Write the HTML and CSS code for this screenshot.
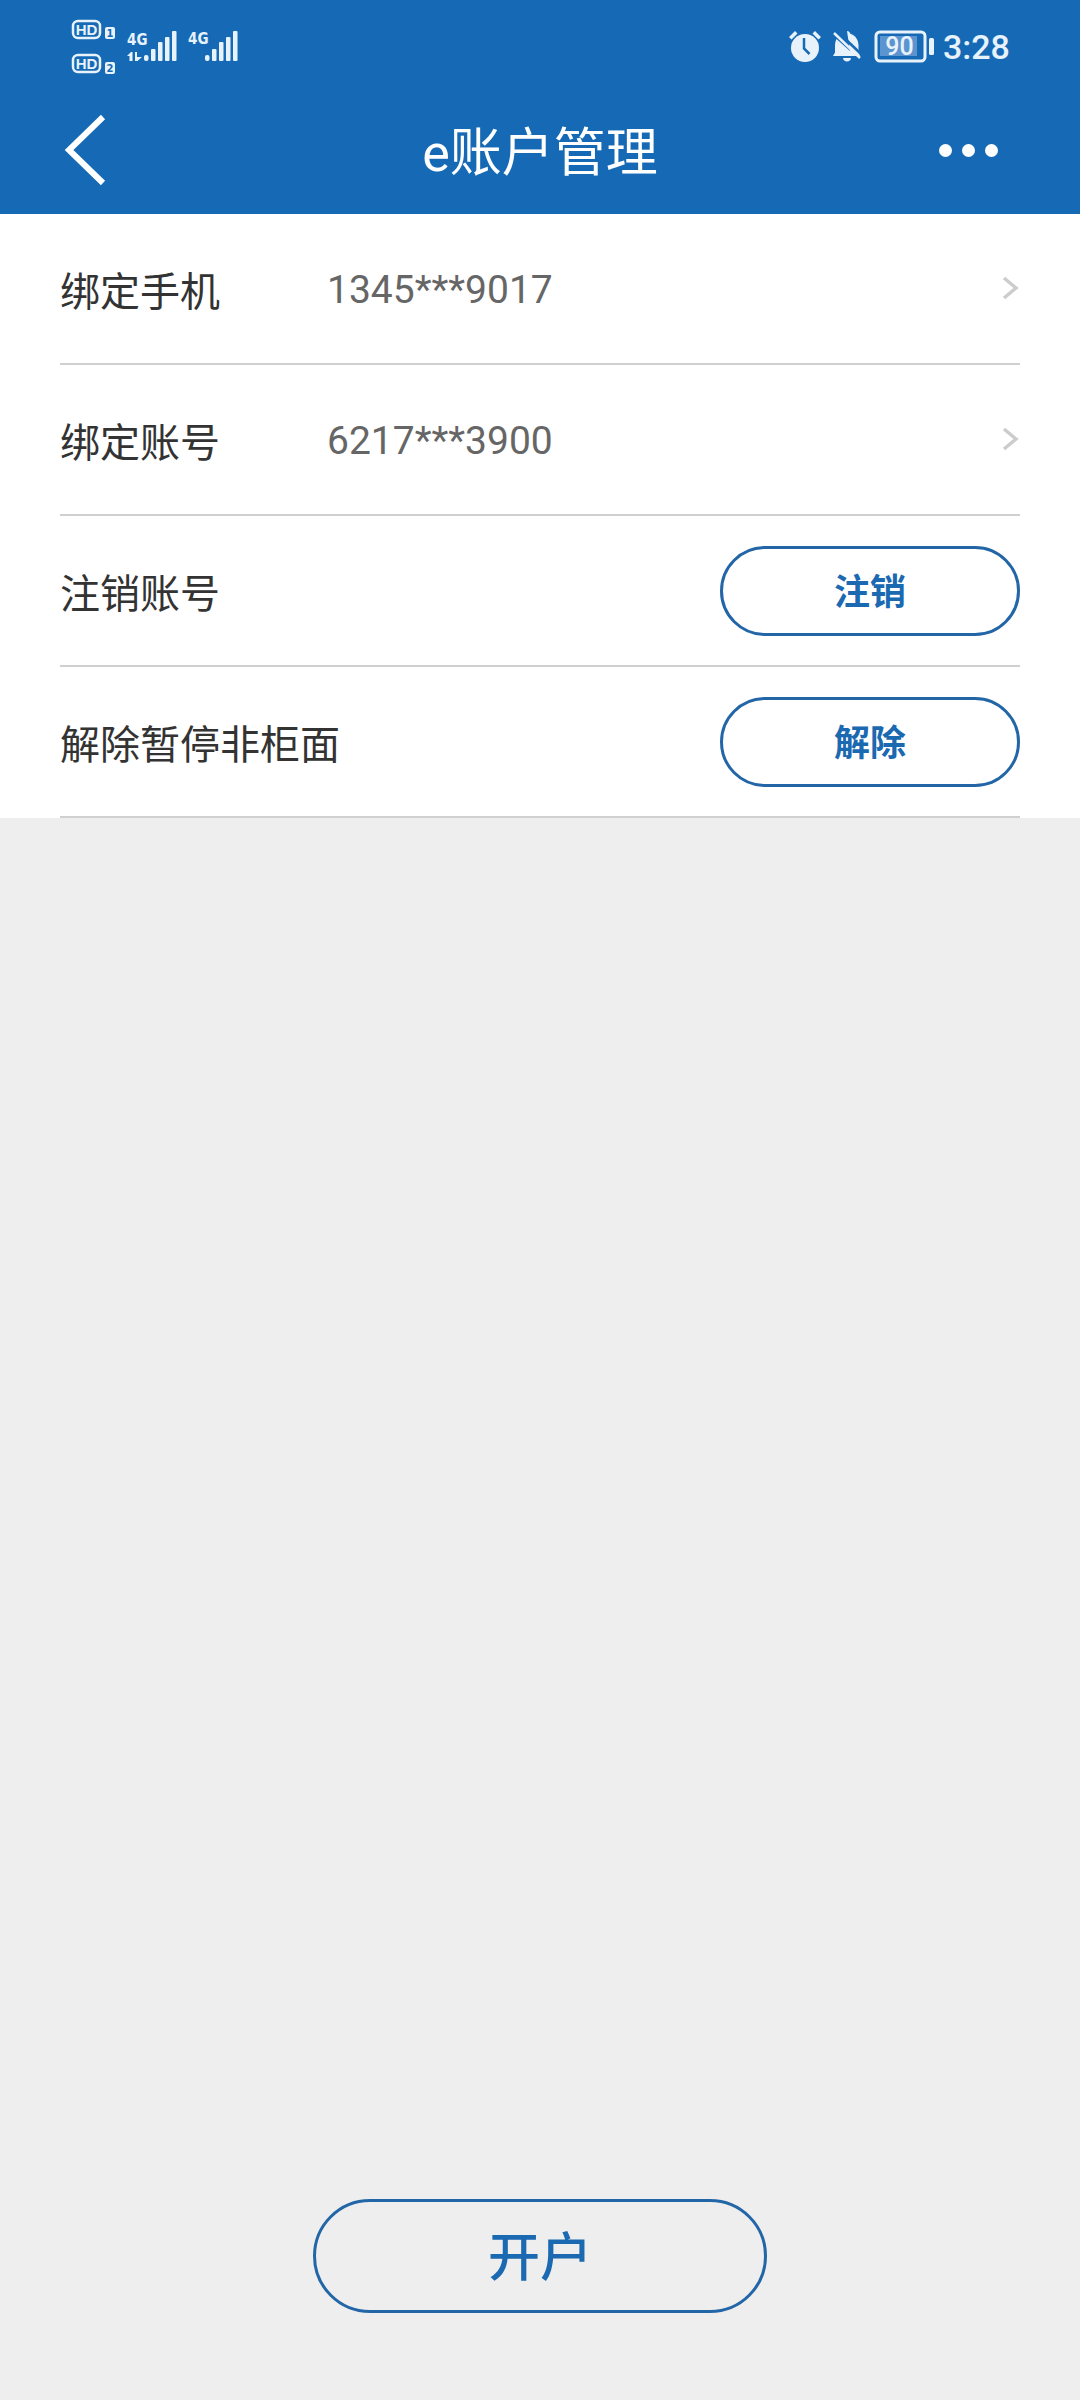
FILE: index.html
```html
<!DOCTYPE html>
<html lang="zh-CN">
<head>
<meta charset="utf-8">
<title>e账户管理</title>
<link rel="stylesheet" href="styles.css">
</head>
<body>
<div class="page">
  <header class="top">
    <div class="status">
      <svg class="sig" viewBox="0 0 200 86" width="200" height="86">
        <g fill="none" stroke="#e8f2fb" stroke-width="2.500">
          <rect x="33" y="21" width="27" height="17" rx="5"/>
          <rect x="33" y="55" width="27" height="17" rx="5"/>
        </g>
        <g fill="#e8f2fb">
          <rect x="65" y="27" width="10" height="12" rx="2"/>
          <rect x="65" y="62" width="10" height="12" rx="2"/>
          <rect x="104" y="55" width="4.500" height="6" rx="2"/>
          <rect x="111" y="49" width="4.500" height="12" rx="1"/>
          <rect x="118" y="42" width="4.500" height="19" rx="1"/>
          <rect x="125" y="37" width="4.500" height="24" rx="1"/>
          <rect x="132" y="31" width="4.500" height="30" rx="1"/>
          <rect x="165" y="55" width="4.500" height="6" rx="2"/>
          <rect x="172" y="49" width="4.500" height="12" rx="1"/>
          <rect x="179" y="42" width="4.500" height="19" rx="1"/>
          <rect x="186" y="37" width="4.500" height="24" rx="1"/>
          <rect x="193" y="31" width="4.500" height="30" rx="1"/>
          <path d="M91 52l-4 4h2.500v5h3v-9zM95 52h2v5h5l-4.500 4h-2.500z"/>
        </g>
        <g class="sig-hd" fill="#e8f2fb">
          <text x="46.500" y="35" text-anchor="middle">HD</text>
          <text x="46.500" y="69" text-anchor="middle">HD</text>
        </g>
        <g class="sig-n" fill="#166ab5">
          <text x="70" y="37" text-anchor="middle">1</text>
          <text x="70" y="72" text-anchor="middle">2</text>
        </g>
        <g class="sig-4g" fill="#e8f2fb">
          <text x="87" y="44.500">4G</text>
          <text x="148" y="43.500">4G</text>
        </g>
      </svg>
      <div class="status-right">
        <svg class="sys" viewBox="0 0 180 86" width="180" height="86">
          <g fill="#e8f2fb">
            <circle cx="45" cy="48" r="14"/>
            <path d="M29 37l6-6 2.500 2.500-6 6zM61 37l-6-6-2.500 2.500 6 6z"/>
            <path d="M87 31c1.500 0 3 1 3 2.500 6 2 8.500 7 8.500 12v7l1.500 3.500H73l2-3.500v-7c0-2 .5-4.500 1.500-6.500L90 51z" />
            <path d="M83 58h8c0 2-2 3.500-4 3.500s-4-1.500-4-3.500z"/>
          </g>
          <path d="M44 38v10.500l5.500 5.500" fill="none" stroke="#166ab5" stroke-width="2.500"/>
          <path d="M74 33l26 25" fill="none" stroke="#e8f2fb" stroke-width="2.500"/>
          <path d="M78 32l22 21" fill="none" stroke="#166ab5" stroke-width="2.500"/>
          <rect x="116" y="32" width="49" height="29" rx="4" fill="none" stroke="#e8f2fb" stroke-width="3"/>
          <rect x="120" y="36" width="37" height="20" fill="#5c94cf"/>
          <rect x="169" y="38" width="5" height="17" rx="1.500" fill="#e8f2fb"/>
          <text class="batt" x="139.500" y="54.500" text-anchor="middle" fill="#e8f2fb">90</text>
        </svg>
        <span class="time">3:28</span>
      </div>
    </div>
    <nav class="nav">
      <svg class="back" viewBox="0 0 45 72" width="45" height="72">
        <path d="M40 3L6 36l34 33" fill="none" stroke="#fff" stroke-width="6"/>
      </svg>
      <h1 class="title">e账户管理</h1>
      <div class="more"><i></i><i></i><i></i></div>
    </nav>
  </header>

  <section class="list">
    <div class="row">
      <span class="label">绑定手机</span>
      <span class="value">1345***9017</span>
      <svg class="chev" viewBox="0 0 17 24" width="17" height="24"><path d="M2 2l12 10L2 22" fill="none" stroke="#ccc" stroke-width="3.500"/></svg>
    </div>
    <div class="row">
      <span class="label">绑定账号</span>
      <span class="value">6217***3900</span>
      <svg class="chev" viewBox="0 0 17 24" width="17" height="24"><path d="M2 2l12 10L2 22" fill="none" stroke="#ccc" stroke-width="3.500"/></svg>
    </div>
    <div class="row">
      <span class="label">注销账号</span>
      <button class="pill">注销</button>
    </div>
    <div class="row">
      <span class="label">解除暂停非柜面</span>
      <button class="pill">解除</button>
    </div>
  </section>

  <main class="rest">
    <button class="open">开户</button>
  </main>
</div>
</body>
</html>
```
FILE: styles.css
```css
* { box-sizing: border-box; }
html, body { margin: 0; padding: 0; }
body {
  width: 1080px;
  height: 2400px;
  font-family: Roboto, "Noto Sans CJK SC", sans-serif;
  background: #eeeeee;
  overflow: hidden;
}
.page { display: flex; flex-direction: column; height: 2400px; }

.top { background: #166ab5; height: 214px; flex: none; color: #fff; }
.status {
  height: 86px;
  padding-left: 40px;
  display: flex;
  justify-content: space-between;
}
.sig, .sys { display: block; }
.sig-hd text { font: 700 15px "Liberation Sans", sans-serif; }
.sig-n text { font: 700 10px "DejaVu Sans", sans-serif; }
.sig-4g text { font: 700 15px "DejaVu Sans Condensed", "DejaVu Sans", sans-serif; }
.batt { font: 500 25px Roboto, sans-serif; }
.status-right { display: flex; width: 320px; }
.time {
  margin-left: 3px;
  font-size: 34px;
  font-weight: 500;
  line-height: 94px;
  color: #e8f2fb;
  height: 86px;
}

.nav {
  height: 128px;
  display: grid;
  grid-template-columns: 1fr auto 1fr;
  align-items: center;
}
.back { display: block; margin-left: 63px; }
.title {
  margin: 0;
  font-size: 52px;
  font-weight: 400;
  line-height: 60px;
  color: #fff;
  padding-top: 7px;
}
.more { display: flex; gap: 10px; justify-self: end; margin-right: 82px; }
.more i { display: block; width: 13px; height: 13px; border-radius: 50%; background: #fff; }

.list { background: #fff; padding: 0 60px 0; flex: none; }
.row {
  height: 151px;
  border-bottom: 2px solid #d0d0d0;
  display: flex;
  align-items: center;
}
.label { font-size: 40px; color: #333; width: 267px; flex: none; white-space: nowrap; }
.value { font-size: 39px; color: #666; flex: 1; padding-top: 3px; }
.chev { margin-right: 1px; position: relative; top: -1px; }
.pill {
  margin-left: auto;
  width: 300px;
  height: 90px;
  border: 3px solid #2366a8;
  border-radius: 45px;
  background: #fff;
  color: #1a69b1;
  font: 700 36px Roboto, "Noto Sans CJK SC", sans-serif;
  padding: 0 0 4px;
}

.rest {
  flex: 1;
  display: flex;
  flex-direction: column;
  justify-content: flex-end;
  align-items: center;
  padding-bottom: 87px;
}
.open {
  width: 454px;
  height: 114px;
  border: 3px solid #2366a8;
  border-radius: 57px;
  background: transparent;
  color: #1a69b1;
  font: 500 52px Roboto, "Noto Sans CJK SC", sans-serif;
  padding: 0 0 6px;
}
```
